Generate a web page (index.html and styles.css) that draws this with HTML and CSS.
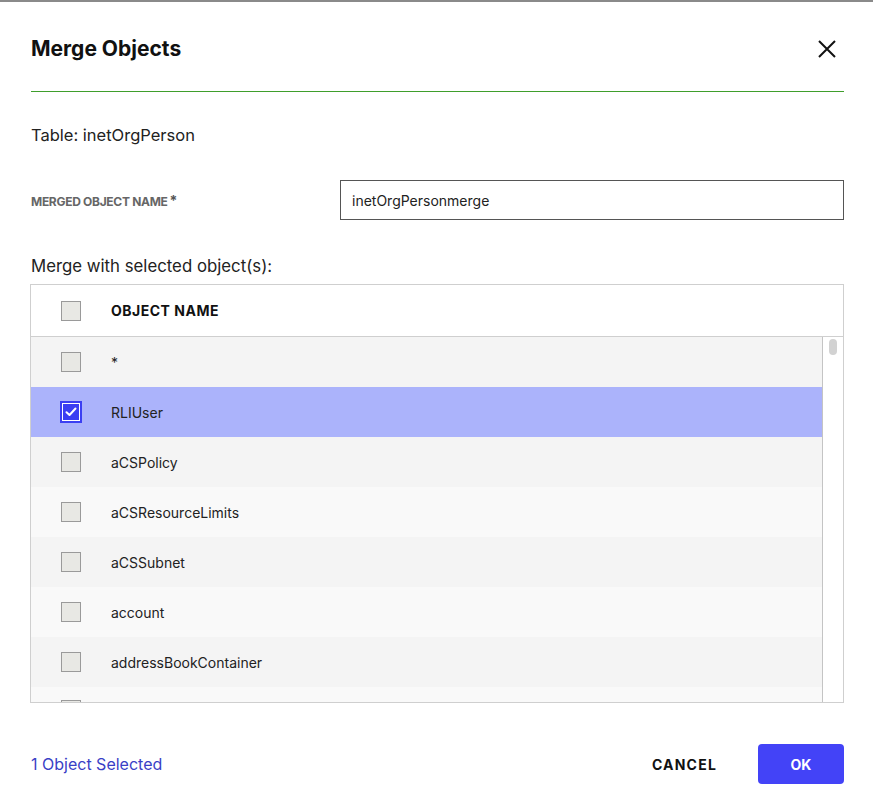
FILE: index.html
```html
<!DOCTYPE html>
<html>
<head>
<meta charset="utf-8">
<link rel="stylesheet" href="styles.css">
</head>
<body>
<div class="topbar"></div>
<div class="dialog">
  <div class="header">
    <h1 class="title">Merge Objects</h1>
    <button class="close" aria-label="Close">
      <svg width="18" height="18" viewBox="0 0 18 18"><path d="M1 1 L17 17 M17 1 L1 17" stroke="#111" stroke-width="2" fill="none"/></svg>
    </button>
  </div>
  <div class="table-label">Table: inetOrgPerson</div>
  <div class="field">
    <label class="field-label">MERGED OBJECT NAME<span class="req">*</span></label>
    <div class="input">inetOrgPersonmerge</div>
  </div>
  <div class="merge-label">Merge with selected object(s):</div>
  <div class="grid">
    <div class="grid-head">
      <span class="cb-cell"><span class="cb"></span></span>
      <span class="col-name">OBJECT NAME</span>
    </div>
    <div class="grid-body">
      <div class="rows">
        <div class="row odd"><span class="cb-cell"><span class="cb"></span></span><span class="name">*</span></div>
        <div class="row selected"><span class="cb-cell"><span class="cb checked"><svg width="12" height="10" viewBox="0 0 12 10"><path d="M1.5 5.2 L4.5 8 L10.5 1.5" stroke="#fff" stroke-width="2" fill="none" stroke-linecap="round" stroke-linejoin="round"/></svg></span></span><span class="name">RLIUser</span></div>
        <div class="row odd"><span class="cb-cell"><span class="cb"></span></span><span class="name">aCSPolicy</span></div>
        <div class="row even"><span class="cb-cell"><span class="cb"></span></span><span class="name">aCSResourceLimits</span></div>
        <div class="row odd"><span class="cb-cell"><span class="cb"></span></span><span class="name">aCSSubnet</span></div>
        <div class="row even"><span class="cb-cell"><span class="cb"></span></span><span class="name">account</span></div>
        <div class="row odd"><span class="cb-cell"><span class="cb"></span></span><span class="name">addressBookContainer</span></div>
        <div class="row even partial"><span class="cb-cell"><span class="cb"></span></span><span class="name"></span></div>
      </div>
      <div class="scrollbar"><div class="thumb"></div></div>
    </div>
  </div>
  <div class="footer">
    <span class="count">1 Object Selected</span>
    <div class="actions">
      <button class="btn-cancel">CANCEL</button>
      <button class="btn-ok">OK</button>
    </div>
  </div>
</div>
</body>
</html>
```
FILE: styles.css
```css
* { box-sizing: border-box; }
html, body { margin: 0; padding: 0; background: #fff; }
body { font-family: Inter, "Noto Sans", sans-serif; color: #1c1c1c; }
.topbar { height: 2px; background: #8a8a8a; }
.dialog { padding: 0 29px 0 31px; }
.header {
  display: flex; align-items: center; justify-content: space-between;
  padding: 35px 0 30px 0; border-bottom: 1px solid #3f9e2c;
}
.title { margin: 0; font-size: 21px; line-height: 24px; font-weight: 700; color: #111; }
.close { border: 0; background: none; padding: 0; margin-right: 8px; width: 18px; height: 18px; display: flex; cursor: pointer; }
.table-label { margin-top: 33px; font-size: 16.5px; line-height: 20px; color: #222; }
.field { display: flex; align-items: center; margin-top: 35px; }
.field-label { width: 309px; font-size: 12px; font-weight: 700; color: #666; letter-spacing: -0.3px; }
.req { font-size: 14px; margin-left: 2px; color: #555; }
.input {
  flex: 1; height: 40px; border: 1px solid #555; padding: 0 11px;
  display: flex; align-items: center; font-size: 14px; color: #222;
}
.merge-label { margin-top: 36px; font-size: 16.8px; line-height: 20px; color: #222; }
.grid { margin-top: 8px; margin-left: -1px; border: 1px solid #cfcfcf; }
.grid-head { display: flex; align-items: center; height: 52px; border-bottom: 1px solid #cfcfcf; background: #fff; }
.cb-cell { width: 80px; display: flex; justify-content: center; }
.cb {
  width: 20px; height: 20px; background: #e8e8e4; border: 1px solid #9a9a9a;
  display: flex; align-items: center; justify-content: center;
}
.cb.checked { width: 22px; height: 22px; background: #3b3ff2; border: 2px solid #3b3ff2; box-shadow: inset 0 0 0 1px #fff; }
.col-name { font-size: 14px; font-weight: 700; letter-spacing: 0.5px; color: #111; }
.grid-body { display: flex; height: 365px; overflow: hidden; }
.rows { flex: 1; overflow: hidden; }
.row { display: flex; align-items: center; height: 50px; font-size: 14px; color: #222; }
.row.partial { align-items: flex-start; padding-top: 13px; }
.row.odd { background: #f4f4f4; }
.row.even { background: #f9f9f9; }
.row.selected { background: #abb3fb; }
.name { font-size: 14px; }
.scrollbar { width: 21px; border-left: 1px solid #c4c4c4; background: #fff; display: flex; justify-content: center; padding-top: 2px; }
.thumb { width: 8px; height: 16px; border-radius: 4px; background: #d2d2d2; }
.footer { display: flex; align-items: center; justify-content: space-between; margin-top: 41px; }
.count { font-size: 16px; color: #3a3fc6; }
.actions { display: flex; align-items: center; gap: 25px; }
.btn-cancel { border: 0; background: none; font-family: inherit; font-size: 14px; font-weight: 700; letter-spacing: 1.2px; color: #111; padding: 0 16px; height: 40px; cursor: pointer; }
.btn-ok { border: 0; background: #4343f7; color: #fff; font-family: inherit; font-size: 14px; font-weight: 700; width: 86px; height: 40px; border-radius: 4px; cursor: pointer; }
```
